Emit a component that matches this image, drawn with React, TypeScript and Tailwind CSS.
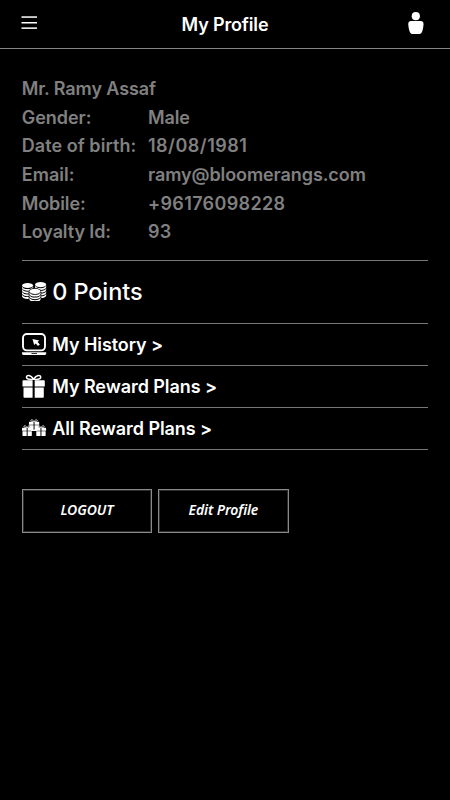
import type { ReactElement, ReactNode } from "react";

type Detail = { label: string; value: string; labelClass: string; valueClass: string };

const details: Detail[] = [
  { label: "Gender:", value: "Male", labelClass: "tracking-[-0.02px]", valueClass: "tracking-[-0.1px]" },
  { label: "Date of birth:", value: "18/08/1981", labelClass: "tracking-[0.06px]", valueClass: "tracking-[0.5px]" },
  { label: "Email:", value: "ramy@bloomerangs.com", labelClass: "tracking-[0.05px]", valueClass: "tracking-[-0.08px]" },
  { label: "Mobile:", value: "+96176098228", labelClass: "tracking-[-0.1px]", valueClass: "tracking-[0.35px]" },
  { label: "Loyalty Id:", value: "93", labelClass: "tracking-[-0.1px]", valueClass: "tracking-[0.35px]" },
];

function MenuIcon(): ReactElement {
  return (
    <svg width="16" height="14" viewBox="0 0 16 14" fill="#fff">
      <rect x="0.5" y="0.3" width="15.5" height="1.5" />
      <rect x="0.5" y="6" width="15.5" height="1.5" />
      <rect x="0.5" y="11.4" width="15.5" height="1.5" />
    </svg>
  );
}

function UserIcon(): ReactElement {
  return (
    <svg width="16" height="23" viewBox="0 0 16 23" fill="#fff">
      <circle cx="7.8" cy="4.2" r="4.1" />
      <path d="M3.2 9h9.4c2 0 3 1.2 2.9 3.2-.2 3.6-.8 6.3-1.8 8.3-.7 1.2-1.7 1.6-3 1.6H5.1c-1.4 0-2.3-.4-3-1.6C1.1 18.5.5 15.8.3 12.2.2 10.2 1.2 9 3.2 9z" />
    </svg>
  );
}

function CoinStack({ x, y, layers }: { x: number; y: number; layers: number }) {
  return (
    <g transform={`translate(${x} ${y})`}>
      {Array.from({ length: layers }, (_, i) => (
        <path
          key={i}
          d="M0 3.6c.6 1.7 2.7 2.6 5.6 2.6s5-.9 5.600-2.600v1.700c-.5 1.800-2.700 2.700-5.600 2.700S.5 7.100 0 5.300z"
          transform={`translate(0 ${i * 2.7})`}
        />
      ))}
      <ellipse cx="5.6" cy="2.7" rx="5.5" ry="2.6" />
    </g>
  );
}

function CoinsIcon(): ReactElement {
  return (
    <svg width="25" height="19" viewBox="0 0 25 19" fill="#fff">
      <CoinStack x={0} y={0.8} layers={4} />
      <CoinStack x={13} y={0} layers={4} />
      <ellipse cx="13" cy="10.3" rx="6.3" ry="4.2" fill="#000" />
      <rect x="6.7" y="10.3" width="12.6" height="8.7" fill="#000" />
      <CoinStack x={7.4} y={6.6} layers={3} />
    </svg>
  );
}

function LaptopIcon(): ReactElement {
  return (
    <svg width="25" height="23" viewBox="0 0 25 23" fill="none">
      <rect x="1" y="1" width="22" height="16.4" rx="3.8" stroke="#fff" strokeWidth="1.9" />
      <path
        d="M10.5 6l6.8 1.500-1.700 1.400 2.300 2.500-1.900 1.700-2.300-2.500-1.500 1.500z"
        fill="#fff"
      />
      <path d="M0 19.2h24.200v1.400c0 .8-.6 1.300-1.400 1.300H1.400C.6 21.900 0 21.400 0 20.600z" fill="#fff" />
      <rect x="9.5" y="20" width="5.5" height="0.8" fill="#000" />
    </svg>
  );
}

function GiftShape(): ReactElement {
  return (
    <g fill="#fff">
      <path
        d="M11.6 5.3C9 5.4 4.8 6 4.5 3.4 4.2.9 8.6.3 11.6 5.3zM11.6 5.3c2.6.1 6.8.7 7.1-1.9.3-2.500-4.100-3.100-7.100 1.900z"
        fill="none"
        stroke="#fff"
        strokeWidth="1.5"
      />
      <path d="M1.5 6.2h9.1v6.2H.5V7.2c0-.6.4-1 1-1zM12.7 6.2h9.1c.6 0 1 .4 1 1v5.2H12.7z" />
      <path d="M1.5 13.6h9.1v10.2H2.5c-.6 0-1-.4-1-1zM12.7 13.6h9.1v9.2c0 .6-.4 1-1 1h-8.100z" />
    </g>
  );
}

function GiftIcon(): ReactElement {
  return (
    <svg width="24" height="24" viewBox="0 0 24 24">
      <GiftShape />
    </svg>
  );
}

function GiftsIcon(): ReactElement {
  return (
    <svg width="25" height="18" viewBox="0 0 25 18">
      <g transform="translate(6.7 0) scale(0.46)">
        <GiftShape />
      </g>
      <rect x="9.1" y="10.6" width="6" height="1.4" fill="#fff" />
      <g transform="translate(-0.2 6) scale(0.46)">
        <GiftShape />
      </g>
      <g transform="translate(13.6 6) scale(0.46)">
        <GiftShape />
      </g>
    </svg>
  );
}

function MenuRow({ icon, children }: { icon: ReactNode; children: ReactNode }): ReactElement {
  return (
    <a className="flex h-[41.9px] items-center border-b border-[#777] text-[18px] font-[560] tracking-[-0.06px]">
      <span className="w-[30.5px] shrink-0">{icon}</span>
      {children}
    </a>
  );
}

export default function App(): ReactElement {
  return (
    <div className="min-h-screen bg-black font-[Inter,sans-serif] text-white">
      <header className="grid h-[49px] grid-cols-[1fr_auto_1fr] items-center border-b border-[#858585] px-[21px]">
        <button className="-mt-[3px] w-4">
          <MenuIcon />
        </button>
        <h1 className="text-[18px] font-[560] tracking-[-0.15px]">My Profile</h1>
        <button className="mr-[5px] -mt-[2px] justify-self-end">
          <UserIcon />
        </button>
      </header>

      <main className="pl-[21.7px] pr-[22px] pt-[26.3px]">
        <section className="h-[185.7px] border-b border-[#777] text-[18px] leading-[28.6px] font-semibold text-[#808080]">
          <p className="tracking-[-0.1px]">Mr. Ramy Assaf</p>
          <dl>
            {details.map((d) => (
              <div key={d.label} className="flex">
                <dt className="w-[126.3px] shrink-0 whitespace-nowrap">
                  <span className={d.labelClass}>{d.label}</span>
                </dt>
                <dd className={d.valueClass}>{d.value}</dd>
              </div>
            ))}
          </dl>
        </section>

        <section className="flex h-[63px] items-center border-b border-[#777] text-[23.5px] font-medium tracking-[-0.1px]">
          <span className="w-[30.5px] shrink-0">
            <CoinsIcon />
          </span>
          0 Points
        </section>

        <nav>
          <MenuRow icon={<LaptopIcon />}>My History &gt;</MenuRow>
          <MenuRow icon={<GiftIcon />}>My Reward Plans &gt;</MenuRow>
          <MenuRow icon={<GiftsIcon />}>All Reward Plans &gt;</MenuRow>
        </nav>

        <div className="mt-[39px] flex gap-1.5 font-['Noto_Sans',sans-serif] text-[14px] font-semibold italic tracking-[-0.1px]">
          <button className="h-11 w-[130.5px] border border-[#8a8a8a] pb-0.5 shadow-[inset_0_0_0_1px_#2c2c2c]">
            LOGOUT
          </button>
          <button className="h-11 w-[130.5px] border border-[#8a8a8a] pb-0.5 shadow-[inset_0_0_0_1px_#2c2c2c]">
            Edit Profile
          </button>
        </div>
      </main>
    </div>
  );
}
